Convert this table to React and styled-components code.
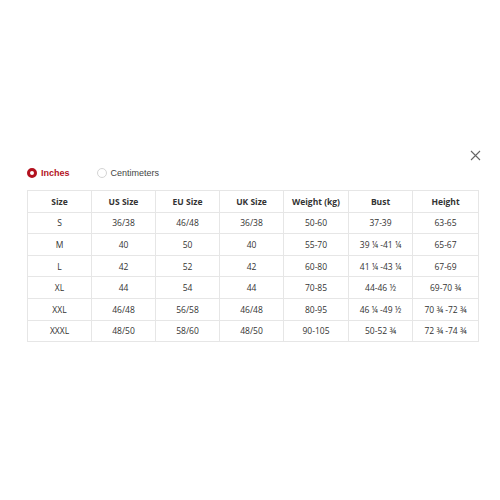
import styled, { createGlobalStyle } from 'styled-components';

const GlobalStyle = createGlobalStyle`
    html, body {
        margin: 0;
        padding: 0;
        background: #fff;
    }
`

const Page = styled.div`
    width: 500px;
    height: 500px;
    box-sizing: border-box;
    padding: 149px 0 0 27px;
    display: flex;
    flex-direction: column;
    font-family: "Open Sans", "Liberation Sans", sans-serif;
`

const TopBar = styled.div`
    display: flex;
    justify-content: flex-end;
    width: 454px;
    height: 12px;
`

const CloseButton = styled.button`
    width: 12px;
    height: 12px;
    padding: 0;
    border: none;
    background: none;
    display: flex;
    align-items: center;
    justify-content: center;
`

const Units = styled.div`
    display: flex;
    align-items: center;
    gap: 27px;
    margin-top: 7px;
    height: 10px;
`

const Option = styled.label`
    display: flex;
    align-items: center;
    gap: 4px;
    font-family: "Liberation Sans", Arial, sans-serif;
    font-size: 9px;
    font-weight: ${p => (p.$active ? 700 : 400)};
    color: ${p => (p.$active ? '#b3121f' : '#444')};
`

const Dot = styled.span`
    box-sizing: border-box;
    width: 10px;
    height: 10px;
    border-radius: 50%;
    border: ${p => (p.$active ? '3px solid #b3121f' : '1px solid #d4d4d4')};
    background: #fff;
`

const Table = styled.table`
    margin-top: 12px;
    border-collapse: collapse;
    width: 451px;
    table-layout: fixed;
`

const Cell = styled.td`
    border: 1px solid #e6e6e6;
    height: 20.6px;
    padding: 0;
    text-align: center;
    font-size: 8.5px;
    color: #333;
    font-weight: ${p => (p.$head ? 700 : 400)};
`

const headers = ['Size', 'US Size', 'EU Size', 'UK Size', 'Weight (kg)', 'Bust', 'Height']

const rows = [
    ['S', '36/38', '46/48', '36/38', '50-60', '37-39', '63-65'],
    ['M', '40', '50', '40', '55-70', '39 ¼ -41 ¼', '65-67'],
    ['L', '42', '52', '42', '60-80', '41 ¼ -43 ¼', '67-69'],
    ['XL', '44', '54', '44', '70-85', '44-46 ½', '69-70 ¾'],
    ['XXL', '46/48', '56/58', '46/48', '80-95', '46 ¼ -49 ½', '70 ¾ -72 ¾'],
    ['XXXL', '48/50', '58/60', '48/50', '90-105', '50-52 ¾', '72 ¾ -74 ¾'],
]

const widths = [64, 64, 64, 64, 65, 64, 66]

function App() {
    return (
        <>
            <GlobalStyle />
            <Page>
                <TopBar>
                    <CloseButton aria-label="close">
                        <svg width="11" height="11" viewBox="0 0 11 11">
                            <path d="M1 1L10 10M10 1L1 10" stroke="#666" strokeWidth="1.1" />
                        </svg>
                    </CloseButton>
                </TopBar>
                <Units>
                    <Option $active>
                        <Dot $active />
                        Inches
                    </Option>
                    <Option>
                        <Dot />
                        Centimeters
                    </Option>
                </Units>
                <Table>
                    <colgroup>
                        {widths.map((w, i) => <col key={i} style={{ width: w }} />)}
                    </colgroup>
                    <thead>
                        <tr>
                            {headers.map(h => <Cell as="th" $head key={h}>{h}</Cell>)}
                        </tr>
                    </thead>
                    <tbody>
                        {rows.map(r => (
                            <tr key={r[0]}>
                                {r.map((c, i) => <Cell key={i}>{c}</Cell>)}
                            </tr>
                        ))}
                    </tbody>
                </Table>
            </Page>
        </>
    )
}

export default App
